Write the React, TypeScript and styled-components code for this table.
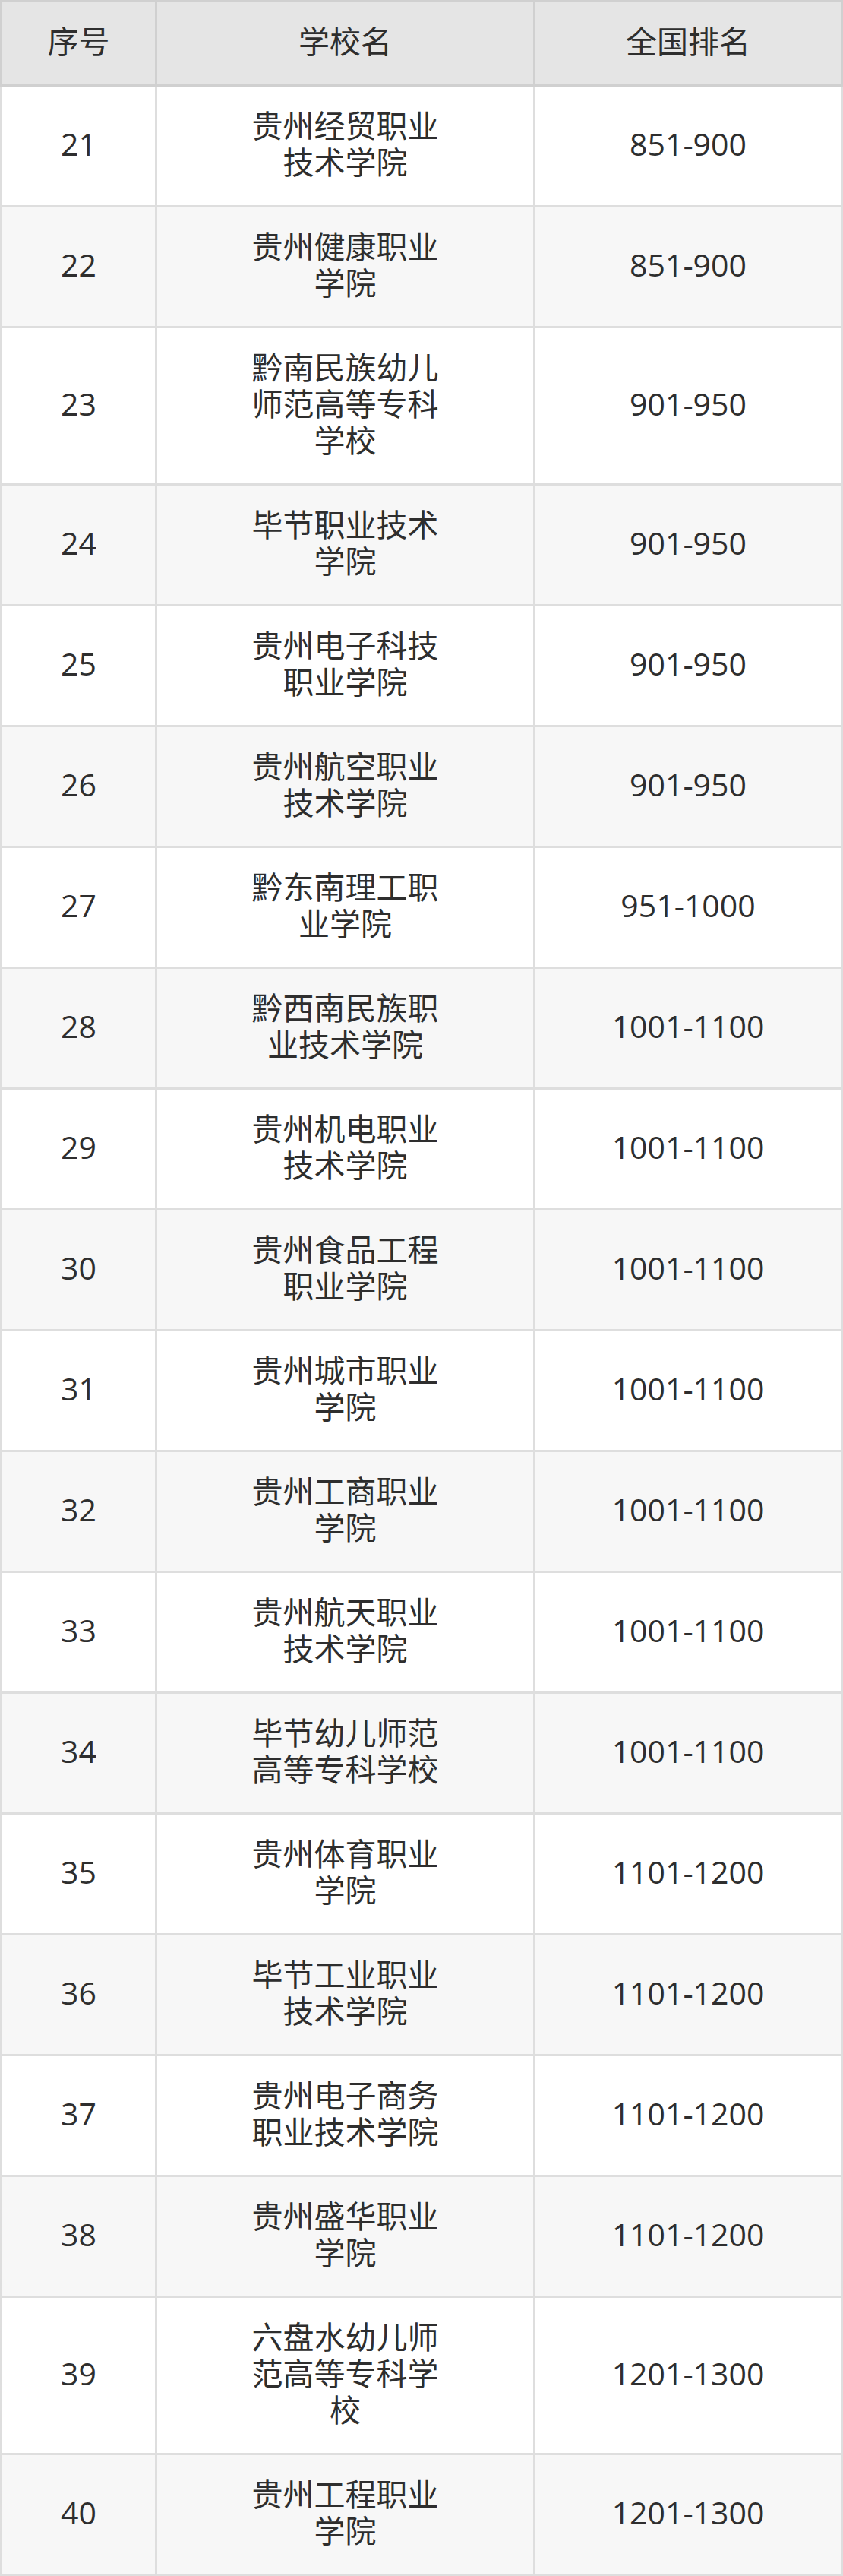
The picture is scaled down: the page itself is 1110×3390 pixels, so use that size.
import React from "react";
import styled, { createGlobalStyle } from "styled-components";

const GlobalStyle = createGlobalStyle`
  html, body {
    margin: 0;
    padding: 0;
    background: #ffffff;
  }
  body {
    font-family: "Open Sans", "Noto Sans CJK SC", sans-serif;
    color: #333333;
  }
`;

const Table = styled.table`
  width: 1110px;
  border-collapse: collapse;
  table-layout: fixed;
  font-size: 41px;
  line-height: 48px;
  color: #2e2e2e;
`;

const HeadCell = styled.th`
  border: 3px solid #d0d0d0;
  background: #e5e5e5;
  font-weight: 400;
  padding: 27px 0 33px;
  text-align: center;
  vertical-align: middle;
`;

const Row = styled.tr<{ $alt: boolean }>`
  background: ${(p) => (p.$alt ? "#f7f7f7" : "#ffffff")};
`;

const Cell = styled.td`
  border: 3px solid #dedede;
  padding: 27px 0 33px;
  text-align: center;
  vertical-align: middle;
`;

const Name = styled.div`
  max-width: 255px;
  margin: 0 auto;
  word-break: break-all;
`;

const rows: [number, string, string][] = [
  [21, "贵州经贸职业技术学院", "851-900"],
  [22, "贵州健康职业学院", "851-900"],
  [23, "黔南民族幼儿师范高等专科学校", "901-950"],
  [24, "毕节职业技术学院", "901-950"],
  [25, "贵州电子科技职业学院", "901-950"],
  [26, "贵州航空职业技术学院", "901-950"],
  [27, "黔东南理工职业学院", "951-1000"],
  [28, "黔西南民族职业技术学院", "1001-1100"],
  [29, "贵州机电职业技术学院", "1001-1100"],
  [30, "贵州食品工程职业学院", "1001-1100"],
  [31, "贵州城市职业学院", "1001-1100"],
  [32, "贵州工商职业学院", "1001-1100"],
  [33, "贵州航天职业技术学院", "1001-1100"],
  [34, "毕节幼儿师范高等专科学校", "1001-1100"],
  [35, "贵州体育职业学院", "1101-1200"],
  [36, "毕节工业职业技术学院", "1101-1200"],
  [37, "贵州电子商务职业技术学院", "1101-1200"],
  [38, "贵州盛华职业学院", "1101-1200"],
  [39, "六盘水幼儿师范高等专科学校", "1201-1300"],
  [40, "贵州工程职业学院", "1201-1300"],
];

export default function App() {
  return (
    <>
      <GlobalStyle />
      <Table>
        <colgroup>
          <col style={{ width: 204 }} />
          <col style={{ width: 498 }} />
          <col />
        </colgroup>
        <thead>
          <tr>
            <HeadCell>序号</HeadCell>
            <HeadCell>学校名</HeadCell>
            <HeadCell>全国排名</HeadCell>
          </tr>
        </thead>
        <tbody>
          {rows.map(([n, name, rank], i) => (
            <Row key={n} $alt={i % 2 === 1}>
              <Cell>{n}</Cell>
              <Cell>
                <Name>{name}</Name>
              </Cell>
              <Cell>{rank}</Cell>
            </Row>
          ))}
        </tbody>
      </Table>
    </>
  );
}
